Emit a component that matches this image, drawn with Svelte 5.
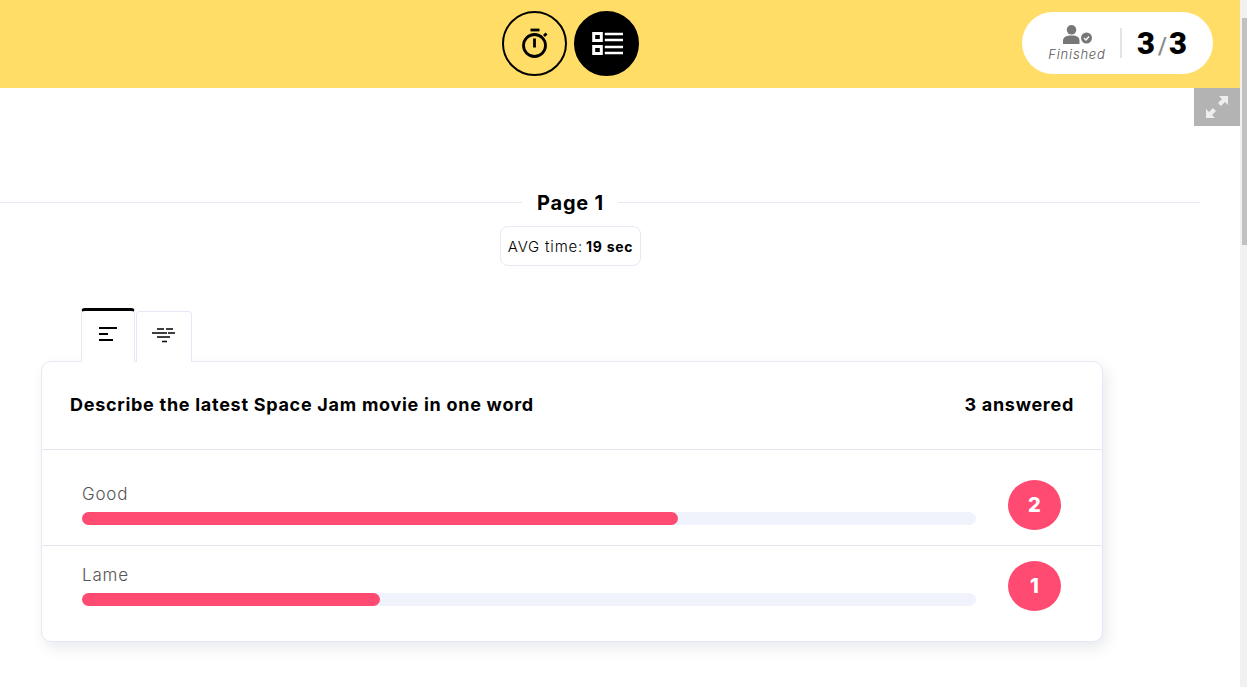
<script>
    const answers = [
        { label: 'Good', count: 2, pct: 66.7 },
        { label: 'Lame', count: 1, pct: 33.3 }
    ];
</script>

<style>
    :global(body) {
        margin: 0;
        overflow: hidden;
        background: #fff;
    }

    .page {
        display: flex;
        height: 687px;
        overflow: hidden;
        font-family: "Inter", "Open Sans", sans-serif;
        color: #000;
    }

    .main {
        flex: 1;
        min-width: 0;
        position: relative;
    }

    .scrollbar {
        width: 7px;
        box-sizing: border-box;
        background: #f1f1f1;
        padding: 18px 0 0 2px;
    }

    .thumb {
        height: 227px;
        background: #c1c1c1;
    }

    .topbar {
        height: 88px;
        box-sizing: border-box;
        background: #ffdd66;
        display: flex;
        align-items: center;
        justify-content: space-between;
        padding: 0 27px 1px 502px;
    }

    .modes {
        display: flex;
        gap: 7px;
    }

    .mode {
        width: 65px;
        height: 65px;
        box-sizing: border-box;
        border-radius: 50%;
        border: 2px solid #000;
        display: flex;
        align-items: center;
        justify-content: center;
    }

    .mode.active {
        background: #000;
    }

    .status {
        width: 191px;
        height: 62px;
        box-sizing: border-box;
        margin-bottom: 1px;
        background: #fff;
        border-radius: 31px;
        display: flex;
        align-items: center;
        padding-left: 26px;
    }

    .finished {
        width: 58px;
        display: flex;
        flex-direction: column;
        align-items: center;
        gap: 1px;
        color: #555;
        font-size: 13px;
        font-style: italic;
        letter-spacing: 0.8px;
        font-weight: 300;
        white-space: nowrap;
    }

    .sep {
        width: 2px;
        height: 30px;
        background: #e3e3e3;
        margin: 0 15px 0 14px;
    }

    .score {
        font-family: "Roboto", sans-serif;
        font-weight: 900;
        font-size: 31px;
        display: flex;
        align-items: baseline;
    }

    .slash {
        font-weight: 500;
        font-size: 23px;
        color: #8a8a8a;
        margin: 0 2px 0 3px;
    }

    .expand {
        position: absolute;
        top: 88px;
        right: 0;
        width: 46px;
        height: 38px;
        background: #b3b3b3;
        display: flex;
        align-items: center;
        justify-content: center;
    }

    .heading {
        width: 1200px;
        margin-top: 101px;
        display: grid;
        grid-template-columns: 522px auto 1fr;
        align-items: center;
        column-gap: 14px;
        font-size: 20px;
        font-weight: 700;
        line-height: 24px;
        letter-spacing: 0.8px;
    }

    .heading span {
        padding: 2px 0 0 1px;
    }

    .heading i {
        height: 1px;
        background: #e8e8f4;
    }

    .avg-wrap {
        width: 1141px;
        display: flex;
        justify-content: center;
        margin-top: 11px;
    }

    .avg {
        height: 40px;
        width: 141px;
        box-sizing: border-box;
        border: 1px solid #e6e9f5;
        border-radius: 8px;
        display: flex;
        align-items: center;
        justify-content: center;
        gap: 3px;
        font-size: 15px;
        font-weight: 300;
        letter-spacing: 0.8px;
        white-space: nowrap;
    }

    .avg b {
        font-weight: 700;
        font-size: 14px;
        letter-spacing: 0.7px;
    }

    .tabs {
        display: flex;
        align-items: flex-end;
        gap: 1px;
        margin: 42px 0 -1px 81px;
        position: relative;
    }

    .tab {
        box-sizing: border-box;
        background: #fff;
        border: 1px solid #e6e9f5;
        border-bottom: none;
        border-radius: 4px 4px 0 0;
        display: flex;
        align-items: center;
        justify-content: center;
        width: 56px;
        height: 51px;
        padding-bottom: 5px;
    }

    .tab.active {
        width: 54px;
        height: 54px;
        border-top: 3px solid #000;
        z-index: 1;
    }

    .card {
        width: 1062px;
        height: 281px;
        box-sizing: border-box;
        margin-left: 41px;
        border: 1px solid #e6e9f5;
        border-radius: 10px;
        background: #fff;
        box-shadow: 4px 6px 14px rgba(40, 50, 90, 0.1);
    }

    .card-head {
        height: 88px;
        box-sizing: border-box;
        padding: 0 28px 2px 28px;
        display: flex;
        align-items: center;
        justify-content: space-between;
        font-size: 18px;
        font-weight: 700;
        letter-spacing: 0.72px;
        border-bottom: 1px solid #e6e6ee;
    }

    .row {
        height: 96px;
        box-sizing: border-box;
        padding: 15px 41px 0 40px;
        display: flex;
        align-items: flex-start;
        justify-content: space-between;
        border-bottom: 1px solid #e6e6ee;
    }

    .card-head + .row {
        padding-top: 30px;
    }

    .row:last-child {
        border-bottom: none;
    }

    .answer {
        width: 894px;
        padding-top: 4px;
    }

    .label {
        font-size: 17px;
        font-weight: 300;
        line-height: 20px;
        letter-spacing: 0.8px;
        color: #555;
        margin-bottom: 8px;
    }

    .track {
        height: 13px;
        border-radius: 7px;
        background: #f0f3fb;
    }

    .fill {
        height: 100%;
        border-radius: 7px;
        background: #ff4b72;
    }

    .badge {
        width: 53px;
        height: 50px;
        border-radius: 50%;
        background: #ff4b72;
        color: #fff;
        font-size: 20px;
        font-weight: 800;
        display: flex;
        align-items: center;
        justify-content: center;
    }
</style>

<div class="page">
    <div class="main">
        <header class="topbar">
            <div class="modes">
                <div class="mode">
                    <svg width="30" height="32" viewBox="0 0 30 32" fill="none" stroke="#000" stroke-width="2.800">
                        <path d="M10.500 2h9" />
                        <circle cx="14.500" cy="17.500" r="11" />
                        <path d="M14.500 10.500v9" />
                        <path d="M24 8l2.500-2.500" />
                    </svg>
                </div>
                <div class="mode active">
                    <svg width="32" height="23" viewBox="0 0 32 23" fill="none" stroke="#fff">
                        <rect x="2.700" y="1.500" width="7.600" height="7" stroke-width="3" />
                        <rect x="2.700" y="14.500" width="7.600" height="7" stroke-width="3" />
                        <path d="M13.800 2h18.200M13.800 8h18.200M13.800 15h18.200M13.800 21h18.200" stroke-width="2.700" />
                    </svg>
                </div>
            </div>
            <div class="status">
                <div class="finished">
                    <svg width="31" height="20" viewBox="0 0 31 20" fill="#777">
                        <circle cx="9.500" cy="4.800" r="4.800" />
                        <path d="M1 19v-3c0-4 3-5.500 8.500-5.500s8 1.500 8 5.500v3z" />
                        <circle cx="24.500" cy="13" r="5.500" />
                        <path d="M22 13l2 2 3-3.500" fill="none" stroke="#fff" stroke-width="1.300" />
                    </svg>
                    <span>Finished</span>
                </div>
                <div class="sep"></div>
                <div class="score">3<span class="slash">/</span>3</div>
            </div>
        </header>

        <div class="expand">
            <svg width="24" height="24" viewBox="0 0 24 24" fill="#eee">
                <path d="M14 1h9v9l-3-3-4 4-3-3 4-4z" />
                <path d="M10 23H1v-9l3 3 4-4 3 3-4 4z" />
            </svg>
        </div>

        <div class="heading">
            <i></i>
            <span>Page 1</span>
            <i></i>
        </div>
        <div class="avg-wrap">
            <div class="avg">AVG time: <b>19 sec</b></div>
        </div>

        <div class="tabs">
            <div class="tab active">
                <svg width="20" height="16" viewBox="0 0 20 16" stroke="#000" stroke-width="2">
                    <path d="M1 2h18M1 8h9M1 14h14" />
                </svg>
            </div>
            <div class="tab">
                <svg width="24" height="16" viewBox="0 0 24 16" stroke="#000" stroke-width="1.600">
                    <path d="M5 2h7M14 2h7M0 6h15M16 6h7M5 10h13M10 14.500h5" />
                </svg>
            </div>
        </div>

        <div class="card">
            <div class="card-head">
                <span>Describe the latest Space Jam movie in one word</span>
                <span>3 answered</span>
            </div>
            {#each answers as answer}
                <div class="row">
                    <div class="answer">
                        <div class="label">{answer.label}</div>
                        <div class="track">
                            <div class="fill" style="width: {answer.pct}%"></div>
                        </div>
                    </div>
                    <div class="badge">{answer.count}</div>
                </div>
            {/each}
        </div>
    </div>
    <div class="scrollbar"><div class="thumb"></div></div>
</div>
